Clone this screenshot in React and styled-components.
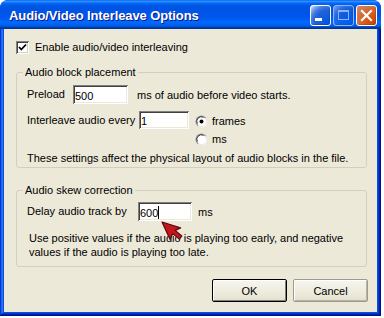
import React from "react";
import styled, { createGlobalStyle } from "styled-components";

const Global = createGlobalStyle`
  html, body { margin: 0; padding: 0; background: #ffffff; }
  body {
    font-family: "Liberation Sans", Arial, sans-serif;
    font-size: 11px;
    color: #000;
  }
  * { box-sizing: border-box; }
`;

const Window = styled.div`
  position: relative;
  width: 381px;
  height: 316px;
  display: flex;
  flex-direction: column;
  border-radius: 8px 8px 0 0;
  overflow: hidden;
  background: #0a4fdc;
`;

const TitleBar = styled.div`
  height: 29px;
  flex: none;
  display: flex;
  align-items: center;
  padding: 1px 4px 0 9px;
  background: linear-gradient(
    to bottom,
    #0058ee 0%,
    #3593ff 4%,
    #288eff 6%,
    #127dff 8%,
    #036ffc 10%,
    #0262ee 14%,
    #0057e5 20%,
    #0054e3 24%,
    #0055eb 56%,
    #005bf5 66%,
    #026afe 76%,
    #0062ef 86%,
    #0052d6 92%,
    #0040ab 94%,
    #003092 100%
  );
`;

const Title = styled.div`
  font-family: "Liberation Sans", Arial, sans-serif;
  font-weight: bold;
  font-size: 13px;
  color: #fff;
  text-shadow: 1px 1px #0a1883;
  letter-spacing: -0.1px;
  flex: 1;
`;

const Controls = styled.div`
  display: flex;
  gap: 2px;
`;

const CtlButton = styled.div`
  width: 21px;
  height: 21px;
  border: 1px solid #fff;
  border-radius: 3px;
  display: flex;
  align-items: center;
  justify-content: center;
  background: ${(p) =>
    p.$kind === "close"
      ? "radial-gradient(circle at 90% 90%, #cc4600 0%, #dc6527 55%, #cd7546 70%, #e0846a 100%)"
      : "radial-gradient(circle at 90% 90%, #0054e9 0%, #2263d5 55%, #4479e4 70%, #a3bbec 90%, #ffffff 100%)"};
  opacity: ${(p) => (p.$disabled ? 0.55 : 1)};
  box-shadow: inset -1px -1px rgba(0, 0, 0, 0.15);
`;

const Frame = styled.div`
  flex: 1;
  display: flex;
  padding: 0 4px 4px 4px;
  background: #0a4fdc;
  box-shadow: inset -1px -1px #00138c, inset 1px 0 #0831d9,
    inset -2px -2px #001ea0, inset 2px 0 #166aee, inset -3px -3px #003bda,
    inset 3px 0 #2d6ff0;
`;

const Client = styled.div`
  flex: 1;
  background: #ece9d8;
  display: flex;
  flex-direction: column;
  padding: 12px 10px 0 12px;
`;

const CheckRow = styled.label`
  display: flex;
  align-items: center;
  gap: 6px;
  height: 13px;
  line-height: 13px;
`;

const Box = styled.span`
  width: 13px;
  height: 13px;
  flex: none;
  background: #fff;
  box-shadow: inset 1px 1px #808080, inset -1px -1px #ffffff,
    inset 2px 2px #404040, inset -2px -2px #d4d0c8;
  display: flex;
  align-items: center;
  justify-content: center;
`;

const Group = styled.fieldset`
  margin: ${(p) => p.$mt}px 0 0 0;
  border: 1px solid #d0d0bf;
  border-radius: 3px;
  padding: ${(p) => p.$pt}px 10px ${(p) => p.$pb}px 10px;
  min-width: 0;
  display: flex;
  flex-direction: column;
`;

const Legend = styled.legend`
  padding: 0 2px;
  margin-left: -4px;
  line-height: 13px;
  height: 13px;
`;

const Row = styled.div`
  display: flex;
  align-items: ${(p) => p.$align || "center"};
  margin-top: ${(p) => p.$mt || 0}px;
`;

const Label = styled.span`
  width: ${(p) => p.$w}px;
  flex: none;
  white-space: nowrap;
  line-height: ${(p) => p.$lh || 13}px;
`;

const Input = styled.div`
  position: relative;
  width: ${(p) => p.$w}px;
  height: ${(p) => p.$h || 19}px;
  flex: none;
  background: #fff;
  padding: 2px 2px 0 2px;
  line-height: 14px;
  box-shadow: inset 1px 1px #808080, inset -1px -1px #ffffff,
    inset 2px 2px #404040, inset -2px -2px #ece9d8;
  display: flex;
  align-items: center;
`;

const Caret = styled.span`
  display: inline-block;
  width: 1px;
  height: 13px;
  background: #000;
`;

const After = styled.span`
  margin-left: ${(p) => p.$ml}px;
  white-space: nowrap;
`;

const RadioCol = styled.div`
  display: flex;
  flex-direction: column;
  margin-left: 6px;
  margin-top: 1px;
`;

const RadioRow = styled.div`
  display: flex;
  align-items: center;
  gap: 4px;
  height: 18px;
`;

const Note = styled.div`
  line-height: 14px;
  margin-top: ${(p) => p.$mt}px;
  margin-left: ${(p) => p.$ml || 0}px;
  white-space: nowrap;
`;

const ButtonRow = styled.div`
  display: flex;
  justify-content: flex-end;
  gap: 6px;
  margin: 12px -1px 0 0;
`;

const Button = styled.div`
  width: 75px;
  height: 23px;
  display: flex;
  align-items: center;
  justify-content: center;
  background: linear-gradient(#f6f5f0, #ece9d8 70%, #e2dfd0);
  border: 1px solid ${(p) => (p.$default ? "#000" : "#9d9a8e")};
  box-shadow: ${(p) =>
    p.$default
      ? "inset 1px 1px #fff, inset -1px -1px #808080"
      : "inset 1px 1px #fff, inset -1px -1px #b8b5a8"};
  border-radius: 2px;
  padding-top: 1px;
`;

const Pointer = styled.svg`
  position: absolute;
  left: 160px;
  top: 220px;
`;

function Radio({ checked }) {
  return (
    <svg width="13" height="13" viewBox="0 0 13 13">
      <defs>
        <linearGradient id="rg" x1="0" y1="0" x2="1" y2="1">
          <stop offset="0" stopColor="#808080" />
          <stop offset="0.5" stopColor="#a0a0a0" />
          <stop offset="0.55" stopColor="#e0e0e0" />
          <stop offset="1" stopColor="#ffffff" />
        </linearGradient>
      </defs>
      <circle cx="6.5" cy="6.5" r="6" fill="url(#rg)" />
      <circle cx="6.5" cy="6.5" r="4.6" fill="#fff" />
      <path d="M2.3 8.5 A4.6 4.6 0 0 1 8.5 2.3" stroke="#404040" strokeWidth="1" fill="none" />
      {checked && <circle cx="6.5" cy="6.5" r="2" fill="#000" />}
    </svg>
  );
}

export default function App() {
  return (
    <>
      <Global />
      <Window>
        <TitleBar>
          <Title>Audio/Video Interleave Options</Title>
          <Controls>
            <CtlButton>
              <svg width="19" height="19" viewBox="0 0 19 19">
                <rect x="4" y="12" width="7" height="3" fill="#fff" />
              </svg>
            </CtlButton>
            <CtlButton $disabled>
              <svg width="19" height="19" viewBox="0 0 19 19">
                <rect x="4.5" y="4.5" width="10" height="9" fill="none" stroke="#fff" strokeWidth="1" />
                <rect x="4" y="4" width="11" height="2" fill="#fff" />
              </svg>
            </CtlButton>
            <CtlButton $kind="close">
              <svg width="19" height="19" viewBox="0 0 19 19">
                <path d="M5 5 L14 14 M14 5 L5 14" stroke="#fff" strokeWidth="2.2" strokeLinecap="square" />
              </svg>
            </CtlButton>
          </Controls>
        </TitleBar>
        <Frame>
          <Client>
            <CheckRow>
              <Box>
                <svg width="9" height="9" viewBox="0 0 9 9">
                  <path d="M1 4 L3.3 6.5 L8 1.5" stroke="#000" strokeWidth="1.8" fill="none" />
                </svg>
              </Box>
              Enable audio/video interleaving
            </CheckRow>

            <Group $mt={12} $pt={6} $pb={2}>
              <Legend>Audio block placement</Legend>
              <Row>
                <Label $w={46}>Preload</Label>
                <Input $w={55}>500</Input>
                <After $ml={9}>ms of audio before video starts.</After>
              </Row>
              <Row $align="flex-start" $mt={7}>
                <Label $w={112} $lh={19}>Interleave audio every</Label>
                <Input $w={50} $h={18}>1</Input>
                <RadioCol>
                  <RadioRow>
                    <Radio checked />
                    frames
                  </RadioRow>
                  <RadioRow>
                    <Radio />
                    ms
                  </RadioRow>
                </RadioCol>
              </Row>
              <Note $mt={3}>
                These settings affect the physical layout of audio blocks in the file.
              </Note>
            </Group>

            <Group $mt={16} $pt={5} $pb={7}>
              <Legend>Audio skew correction</Legend>
              <Row>
                <Label $w={111}>Delay audio track by</Label>
                <Input $w={54}>
                  600
                  <Caret />
                </Input>
                <After $ml={6}>ms</After>
              </Row>
              <Note $mt={10} $ml={2}>
                Use positive values if the audio is playing too early, and negative
                <br />
                values if the audio is playing too late.
              </Note>
            </Group>

            <ButtonRow>
              <Button $default>OK</Button>
              <Button>Cancel</Button>
            </ButtonRow>
          </Client>
        </Frame>
        <Pointer width="24" height="24" viewBox="0 0 24 24">
          <path
            d="M2 2 L10.1 19.4 L12.7 13.6 L19.3 19.1 L21.8 16 L15.2 10.4 L20.6 7.9 Z"
            fill="#c4161c"
            stroke="#5a0a0a"
            strokeWidth="1.2"
            strokeLinejoin="round"
          />
        </Pointer>
      </Window>
    </>
  );
}
